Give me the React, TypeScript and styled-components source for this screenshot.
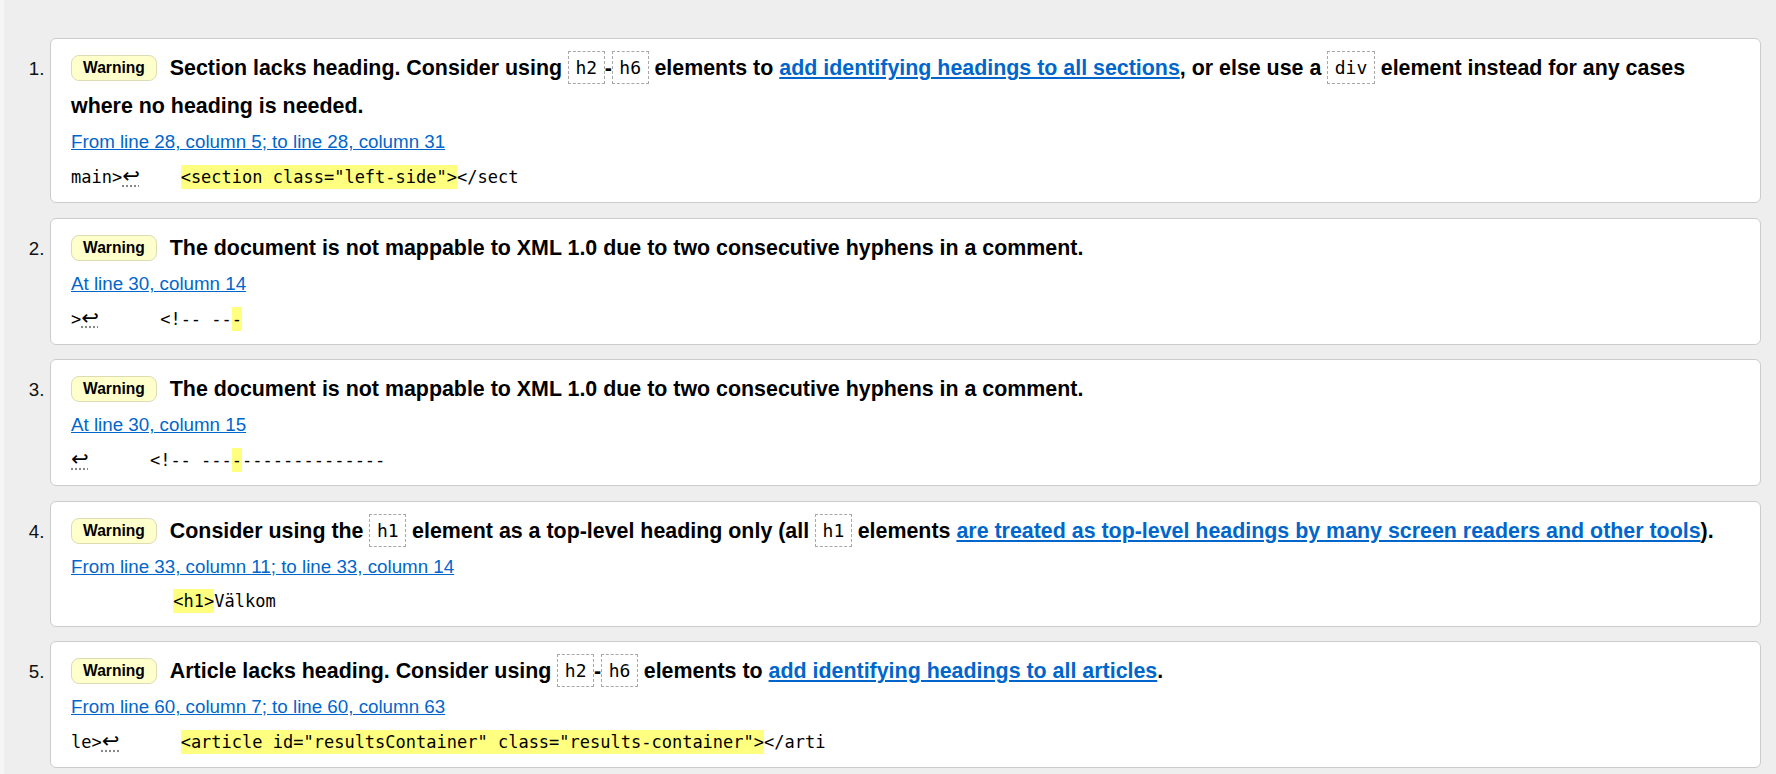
import React from 'react';
import styled, { createGlobalStyle } from 'styled-components';

const Global = createGlobalStyle`
  html, body { margin: 0; padding: 0; background: #eeeeee; }
  body {
    border-left: 4px solid #f6f6f6;
    font-family: "Liberation Sans", Arial, sans-serif;
    color: #000;
  }
`;

const List = styled.ol`
  list-style: none;
  margin: 0;
  padding: 38px 15px 20px 0;
  display: flex;
  flex-direction: column;
  gap: 14.5px;
`;

const Item = styled.li`
  display: flex;
  align-items: baseline;
`;

const Num = styled.span`
  flex: 0 0 46px;
  box-sizing: border-box;
  text-align: right;
  padding-right: 5.5px;
  font-size: 18.75px;
  color: #111;
`;

const Card = styled.div`
  flex: 1;
  min-width: 0;
  background: #fff;
  border: 1px solid #cccccc;
  border-radius: 6px;
  padding: 10px 20px 8px;
`;

const Message = styled.p`
  margin: 0;
  font-size: 21.4px;
  font-weight: bold;
  line-height: 38px;
`;

const Badge = styled.strong`
  display: inline-block;
  vertical-align: top;
  margin: 6px 13px 0 0;
  height: 26px;
  box-sizing: border-box;
  line-height: 24px;
  padding: 0 11px;
  font-size: 15.6px;
  background: #ffffcc;
  border: 1px solid #dcdcb4;
  border-radius: 8px;
`;

const Code = styled.code`
  display: inline-block;
  vertical-align: top;
  margin-top: 2px;
  height: 33px;
  box-sizing: border-box;
  line-height: 31px;
  padding: 0 6.5px;
  border: 1px dashed #a8a8a8;
  font-family: "DejaVu Sans Mono", monospace;
  font-size: 18px;
  font-weight: normal;
`;

const Link = styled.a`
  color: #0066cc;
  text-decoration: underline;
`;

const Location = styled.p`
  margin: 0;
  font-size: 18.75px;
  line-height: 34px;
`;

const Extract = styled.p`
  margin: 0;
  font-family: "DejaVu Sans Mono", monospace;
  font-size: 17px;
  line-height: 34px;
  white-space: pre;
`;

const Mark = styled.mark`
  background: #ffff80;
  color: inherit;
  padding: 2px 0;
`;

const LineBreak = styled.abbr`
  display: inline-block;
  width: 17.5px;
  font-family: "DejaVu Sans", sans-serif;
  font-size: 21px;
  text-decoration: underline dotted #888;
`;

type Entry = {
  message: React.ReactNode;
  location: string;
  extract: React.ReactNode;
};

const entries: Entry[] = [
  {
    message: (
      <>
        Section lacks heading. Consider using <Code>h2</Code>-<Code>h6</Code> elements to{' '}
        <Link href="#">add identifying headings to all sections</Link>, or else use a <Code>div</Code>{' '}
        element instead for any cases where no heading is needed.
      </>
    ),
    location: 'From line 28, column 5; to line 28, column 31',
    extract: (
      <>
        main&gt;<LineBreak title="Line break">↩</LineBreak>{'    '}
        <Mark>&lt;section class="left-side"&gt;</Mark>&lt;/sect
      </>
    ),
  },
  {
    message: <>The document is not mappable to XML 1.0 due to two consecutive hyphens in a comment.</>,
    location: 'At line 30, column 14',
    extract: (
      <>
        &gt;<LineBreak title="Line break">↩</LineBreak>{'      <!-- --'}
        <Mark>-</Mark>
      </>
    ),
  },
  {
    message: <>The document is not mappable to XML 1.0 due to two consecutive hyphens in a comment.</>,
    location: 'At line 30, column 15',
    extract: (
      <>
        <LineBreak title="Line break">↩</LineBreak>{'      <!-- ---'}
        <Mark>-</Mark>
        {'--------------'}
      </>
    ),
  },
  {
    message: (
      <>
        Consider using the <Code>h1</Code> element as a top-level heading only (all <Code>h1</Code>{' '}
        elements <Link href="#">are treated as top-level headings by many screen readers and other tools</Link>).
      </>
    ),
    location: 'From line 33, column 11; to line 33, column 14',
    extract: (
      <>
        {'          '}
        <Mark>&lt;h1&gt;</Mark>Välkom
      </>
    ),
  },
  {
    message: (
      <>
        Article lacks heading. Consider using <Code>h2</Code>-<Code>h6</Code> elements to{' '}
        <Link href="#">add identifying headings to all articles</Link>.
      </>
    ),
    location: 'From line 60, column 7; to line 60, column 63',
    extract: (
      <>
        le&gt;<LineBreak title="Line break">↩</LineBreak>{'      '}
        <Mark>&lt;article id="resultsContainer" class="results-container"&gt;</Mark>&lt;/arti
      </>
    ),
  },
];

export default function App() {
  return (
    <>
      <Global />
      <List>
        {entries.map((e, i) => (
          <Item key={i}>
            <Num>{i + 1}.</Num>
            <Card>
              <Message>
                <Badge>Warning</Badge>
                {e.message}
              </Message>
              <Location>
                <Link href="#">{e.location}</Link>
              </Location>
              <Extract>{e.extract}</Extract>
            </Card>
          </Item>
        ))}
      </List>
    </>
  );
}
